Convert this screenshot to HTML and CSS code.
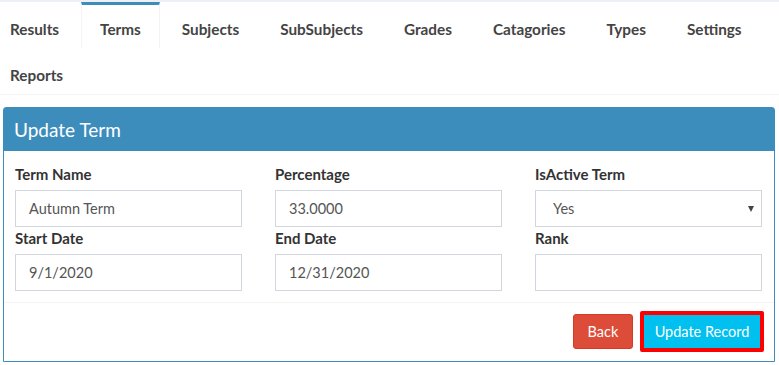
FILE: index.html
```html
<!DOCTYPE html>
<html>
<head>
<meta charset="utf-8">
<link rel="stylesheet" href="styles.css">
</head>
<body>
<div class="topband"></div>
<ul class="tabs">
  <li class="tab">Results</li>
  <li class="tab active">Terms</li>
  <li class="tab">Subjects</li>
  <li class="tab">SubSubjects</li>
  <li class="tab">Grades</li>
  <li class="tab">Catagories</li>
  <li class="tab">Types</li>
  <li class="tab">Settings</li>
  <li class="tab">Reports</li>
</ul>
<div class="box">
  <div class="box-header"><h3 class="box-title">Update Term</h3></div>
  <div class="box-body">
    <div class="field">
      <label class="lbl">Term Name</label>
      <div class="input">Autumn Term</div>
    </div>
    <div class="field">
      <label class="lbl">Percentage</label>
      <div class="input">33.0000</div>
    </div>
    <div class="field">
      <label class="lbl">IsActive Term</label>
      <div class="input select">Yes<span class="caret"></span></div>
    </div>
    <div class="field">
      <label class="lbl">Start Date</label>
      <div class="input">9/1/2020</div>
    </div>
    <div class="field">
      <label class="lbl">End Date</label>
      <div class="input">12/31/2020</div>
    </div>
    <div class="field">
      <label class="lbl">Rank</label>
      <div class="input"></div>
    </div>
  </div>
  <div class="box-footer">
    <button class="btn btn-back">Back</button>
    <button class="btn btn-update">Update Record</button>
  </div>
</div>
</body>
</html>
```
FILE: styles.css
```css
* { box-sizing: border-box; }
html, body { margin: 0; padding: 0; background: #fff; }
body {
  font-family: "Source Sans Pro", Lato, "Open Sans", sans-serif;
  font-size: 14px;
  color: #333;
}
.topband { height: 2px; background: #ecf0f5; }
.tabs {
  list-style: none;
  margin: 0 0 0 -9px;
  padding: 0;
  display: flex;
  flex-wrap: wrap;
  border-bottom: 1px solid #f4f4f4;
  width: 790px;
}
.tab {
  height: 46px;
  line-height: 20px;
  padding: 14px 18px 0;
  margin-right: 3px;
  font-size: 15.3px;
  font-weight: bold;
  color: #444;
  border: 1px solid transparent;
  border-top: 3px solid transparent;
  border-bottom: none;
}
.tab.active {
  border-color: #f4f4f4;
  border-top-color: #3c8dbc;
}
.box {
  margin: 12px 4px 0 3px;
  border: 1px solid #3c8dbc;
  border-radius: 3px 3px 0 0;
  height: 255px;
}
.box-header {
  background: #3c8dbc;
  height: 43px;
  padding: 0 10px;
  display: flex;
  align-items: center;
}
.box-title {
  margin: 0;
  font-size: 19px;
  font-weight: normal;
  color: #fff;
}
.box-body {
  display: grid;
  grid-template-columns: 1fr 1fr 1fr;
  column-gap: 33px;
  padding: 13px 12px 10px 11px;
  border-bottom: 1px solid #f4f4f4;
}
.field { display: flex; flex-direction: column; }
.lbl {
  font-size: 15px;
  font-weight: bold;
  line-height: 20px;
  margin-bottom: 6px;
}
.input {
  height: 37px;
  border: 1px solid #d2d6de;
  padding: 0 13px;
  line-height: 35px;
  font-size: 14.5px;
  color: #555;
  margin-bottom: 1px;
  position: relative;
}
.select { padding-left: 17px; }
.caret {
  position: absolute;
  right: 7px;
  top: 15px;
  width: 0;
  height: 0;
  border-left: 3.5px solid transparent;
  border-right: 3.5px solid transparent;
  border-top: 6px solid #444;
}
.box-footer {
  display: flex;
  justify-content: flex-end;
  align-items: center;
  gap: 7px;
  padding: 8px 10px 0 0;
}
.btn {
  font-family: inherit;
  font-size: 14.5px;
  color: #fff;
  cursor: pointer;
}
.btn-back {
  width: 60px;
  height: 35px;
  background: #dd4b39;
  border: 1px solid #d73925;
  border-radius: 3px;
}
.btn-update {
  width: 124px;
  height: 41px;
  background: #00c0ef;
  border: 4px solid #ff0000;
  border-radius: 2px;
  padding: 0;
}
```
